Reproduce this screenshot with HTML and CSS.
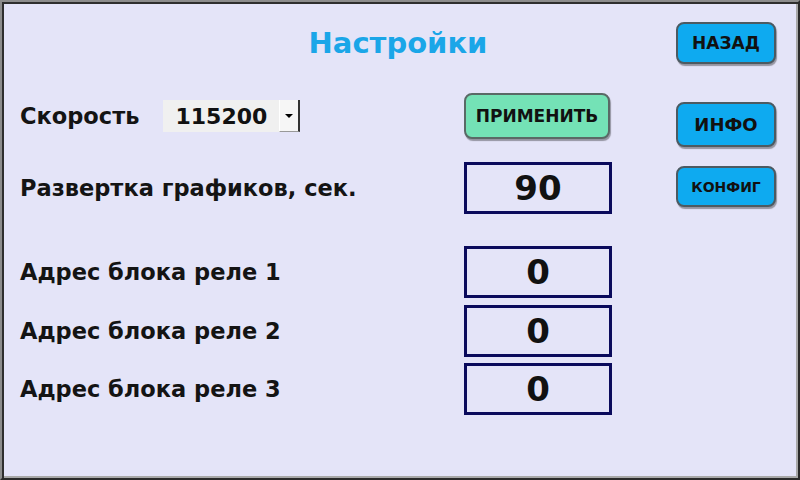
FILE: index.html
```html
<!DOCTYPE html>
<html lang="ru">
<head>
<meta charset="utf-8">
<link rel="stylesheet" href="styles.css">
</head>
<body>
<div class="screen">
  <h1 class="title">Настройки</h1>
  <button class="btn btn-blue btn-back">НАЗАД</button>

  <div class="label row-b">Скорость
    <div class="select"><span class="select-value">115200</span><span class="select-arrow"></span></div>
  </div>
  <button class="btn btn-green btn-apply">ПРИМЕНИТЬ</button>
  <button class="btn btn-blue btn-info">ИНФО</button>

  <div class="label row-c">Развертка графиков, сек.</div>
  <div class="field row-c">90</div>
  <button class="btn btn-blue btn-config">КОНФИГ</button>

  <div class="label row-d">Адрес блока реле 1</div>
  <div class="field row-d">0</div>

  <div class="label row-e">Адрес блока реле 2</div>
  <div class="field row-e">0</div>

  <div class="label row-f">Адрес блока реле 3</div>
  <div class="field row-f">0</div>
</div>
</body>
</html>
```
FILE: styles.css
```css
html, body {
  margin: 0;
  padding: 0;
  background: #e4e4f8;
}

.screen {
  width: 800px;
  height: 480px;
  box-sizing: border-box;
  background: #e4e4f8;
  border-style: solid;
  border-width: 2px;
  border-color: #8c8c8c #2a2a2a #2a2a2a #8c8c8c;
  box-shadow: inset 2px 2px 0 #2e2e2e, inset -2px -2px 0 #a8a8a8;
  padding: 20px 20px 0 18px;
  display: grid;
  grid-template-columns: 444px 148px 64px 100px;
  grid-template-rows: 71px 69px 84px 59px 58px 50px;
  font-family: "DejaVu Sans", Verdana, sans-serif;
  font-weight: bold;
  color: #111;
}

.title {
  grid-column: 1 / -1;
  grid-row: 1;
  margin: 0;
  height: 42px;
  display: flex;
  align-items: center;
  justify-content: center;
  font-size: 29px;
  font-weight: bold;
  color: #1aa6e8;
}

.label {
  grid-column: 1;
  display: flex;
  align-items: center;
  height: 52px;
  font-size: 22.5px;
  color: #141414;
}

.row-b { grid-row: 2; height: 46px; }
.row-c { grid-row: 3; }
.row-d { grid-row: 4; }
.row-e { grid-row: 5; }
.row-f { grid-row: 6; }

.select {
  margin-left: 24px;
  width: 137px;
  height: 32px;
  display: flex;
  align-items: stretch;
  background: #f0f0f0;
}

.select-value {
  flex: 1;
  display: flex;
  align-items: center;
  justify-content: center;
  font-size: 22px;
  color: #111;
}

.select-arrow {
  width: 18px;
  background: #f6f6f6;
  border-right: 2px solid #333;
  border-bottom: 1px solid #999;
  border-left: 1px solid #fff;
  display: flex;
  align-items: center;
  justify-content: center;
}

.select-arrow::after {
  content: "";
  border-left: 4px solid transparent;
  border-right: 4px solid transparent;
  border-top: 4px solid #000;
}

.field {
  grid-column: 2;
  box-sizing: border-box;
  width: 148px;
  height: 52px;
  border: 3px solid #0a0a5c;
  display: flex;
  align-items: center;
  justify-content: center;
  font-size: 34px;
  color: #111;
}

.btn {
  box-sizing: border-box;
  margin: 0;
  padding: 0;
  font-family: "DejaVu Sans", Verdana, sans-serif;
  font-weight: bold;
  color: #111;
  border: 2px solid #4c5a62;
  border-radius: 8px;
  box-shadow: 1px 2px 1px rgba(0, 0, 0, 0.35);
}

.btn-blue {
  background: #0eaaf0;
}

.btn-green {
  background: #74e2b6;
  border-color: #5a6966;
}

.btn-back {
  grid-column: 4;
  grid-row: 1;
  align-self: start;
  width: 100px;
  height: 42px;
  font-size: 17px;
}

.btn-apply {
  grid-column: 2;
  grid-row: 2;
  align-self: start;
  width: 146px;
  height: 46px;
  font-size: 17px;
}

.btn-info {
  grid-column: 4;
  grid-row: 2;
  align-self: start;
  margin-top: 9px;
  width: 100px;
  height: 45px;
  font-size: 18px;
}

.btn-config {
  grid-column: 4;
  grid-row: 3;
  align-self: start;
  margin-top: 4px;
  width: 100px;
  height: 41px;
  font-size: 14px;
}
```
